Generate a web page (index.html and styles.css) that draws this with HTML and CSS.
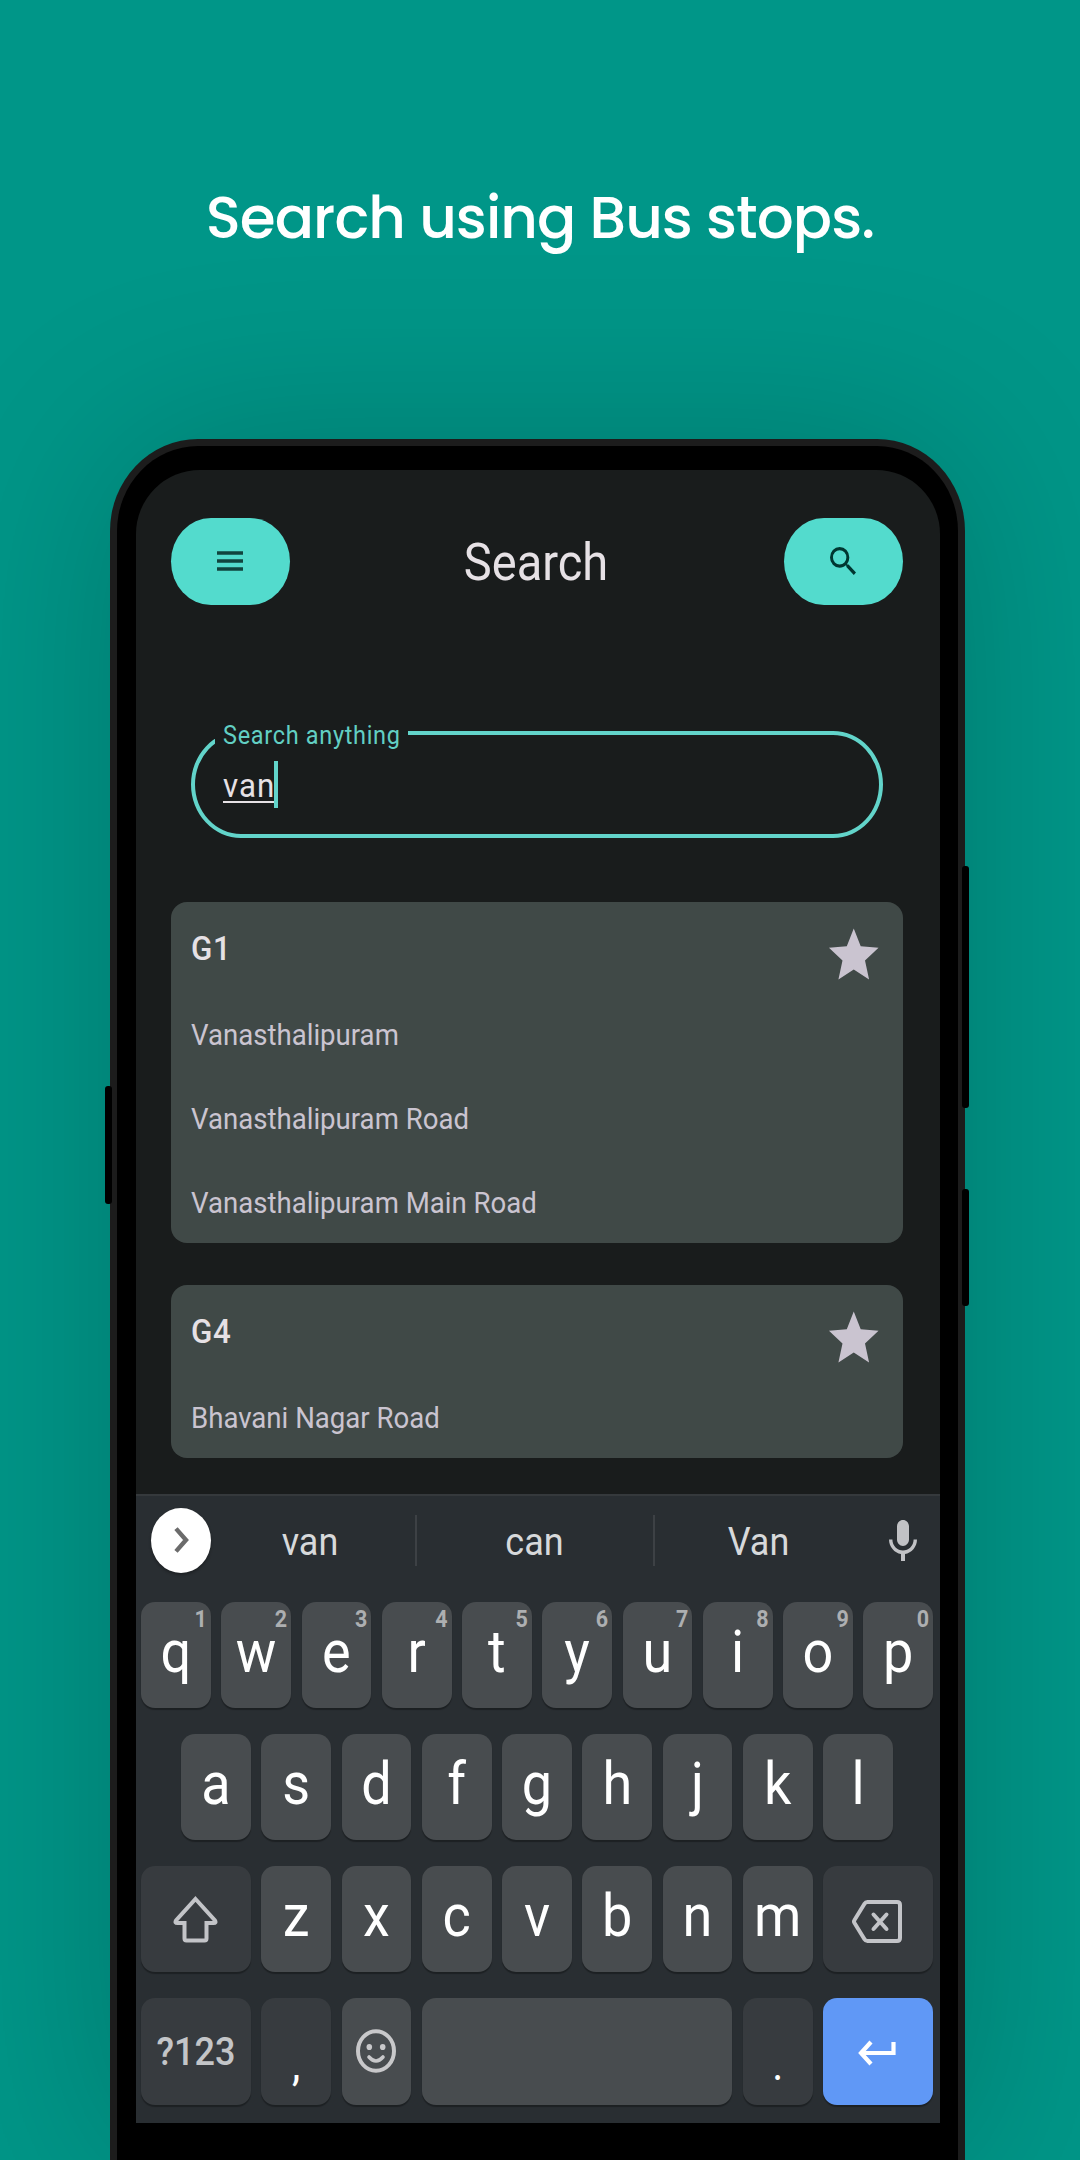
FILE: index.html
```html
<!DOCTYPE html>
<html lang="en">
<head>
<meta charset="utf-8">
<title>Search using Bus stops.</title>
<link rel="stylesheet" href="styles.css">
</head>
<body>
<div class="poster">
  <h1 class="headline"><span>Search using Bus stops.</span></h1>
  <div class="phone">
    <i class="side-button mute"></i>
    <i class="side-button volume"></i>
    <i class="side-button power"></i>
    <div class="screen">
      <main class="app">
        <header class="app-bar">
          <button class="pill" aria-label="Menu"><svg class="icon-menu" viewBox="0 0 26 20" preserveAspectRatio="none"><path d="M0 2h26M0 10h26M0 18h26" fill="none" stroke="#10443e" stroke-width="3.4"/></svg></button>
          <h2 class="title tall">Search</h2>
          <button class="pill" aria-label="Search"><svg class="icon-search" viewBox="3 3 17.49 17.49" preserveAspectRatio="none"><path fill="#003731" d="M15.5 14h-.79l-.28-.27A6.47 6.47 0 0 0 16 9.5 6.5 6.5 0 1 0 9.5 16c1.61 0 3.09-.59 4.23-1.57l.27.28v.79l5 4.99L20.49 19l-4.99-5zm-6 0a4.5 4.5 0 1 1 0-9 4.5 4.5 0 0 1 0 9z"/></svg></button>
        </header>
        <div class="field">
          <label class="field-label"><span class="tall">Search anything</span></label>
          <span class="field-value"><span class="tall">van</span></span><i class="cursor"></i>
        </div>
        <section class="card">
          <div class="card-head"><h3 class="tall">G1</h3><svg class="star" viewBox="0 0 24 24" preserveAspectRatio="none"><path d="M12 17.27 18.18 21l-1.64-7.03L22 9.24l-7.19-.61L12 2 9.19 8.63 2 9.24l5.46 4.73L5.82 21z"/></svg></div>
          <p><span class="tall">Vanasthalipuram</span></p>
          <p><span class="tall">Vanasthalipuram Road</span></p>
          <p><span class="tall">Vanasthalipuram Main Road</span></p>
        </section>
        <section class="card">
          <div class="card-head"><h3 class="tall">G4</h3><svg class="star" viewBox="0 0 24 24" preserveAspectRatio="none"><path d="M12 17.27 18.18 21l-1.64-7.03L22 9.24l-7.19-.61L12 2 9.19 8.63 2 9.24l5.46 4.73L5.82 21z"/></svg></div>
          <p><span class="tall">Bhavani Nagar Road</span></p>
        </section>
      </main>
      <div class="keyboard">
        <div class="suggestions">
          <span class="expand"><svg width="15" height="26" viewBox="0 0 15 26"><path d="M2 1.6 12 13 2 24.4" fill="none" stroke="#6b6b6b" stroke-width="4.4"/></svg></span>
          <span class="word first"><span class="tall">van</span></span>
          <span class="word middle"><span class="tall">can</span></span>
          <span class="word last"><span class="tall">Van</span></span>
          <svg class="mic" viewBox="5 2 14 19" preserveAspectRatio="none"><path d="M12 14c1.66 0 3-1.34 3-3V5c0-1.66-1.34-3-3-3S9 3.34 9 5v6c0 1.66 1.34 3 3 3zM17.3 11c0 3-2.54 5.1-5.3 5.1S6.700 14 6.700 11H5c0 3.410 2.720 6.230 6 6.720V21h2v-3.280c3.280-.48 6-3.300 6-6.720z"/></svg>
        </div>
        <div class="row">
          <span class="key"><b class="tall">q</b><small class="tall">1</small></span>
          <span class="key"><b class="tall">w</b><small class="tall">2</small></span>
          <span class="key"><b class="tall">e</b><small class="tall">3</small></span>
          <span class="key"><b class="tall">r</b><small class="tall">4</small></span>
          <span class="key"><b class="tall">t</b><small class="tall">5</small></span>
          <span class="key"><b class="tall">y</b><small class="tall">6</small></span>
          <span class="key"><b class="tall">u</b><small class="tall">7</small></span>
          <span class="key"><b class="tall">i</b><small class="tall">8</small></span>
          <span class="key"><b class="tall">o</b><small class="tall">9</small></span>
          <span class="key"><b class="tall">p</b><small class="tall">0</small></span>
        </div>
        <div class="row">
          <span class="key"><b class="tall">a</b></span>
          <span class="key"><b class="tall">s</b></span>
          <span class="key"><b class="tall">d</b></span>
          <span class="key"><b class="tall">f</b></span>
          <span class="key"><b class="tall">g</b></span>
          <span class="key"><b class="tall">h</b></span>
          <span class="key"><b class="tall">j</b></span>
          <span class="key"><b class="tall">k</b></span>
          <span class="key"><b class="tall">l</b></span>
        </div>
        <div class="row">
          <span class="key dark wide"><svg width="45" height="47" viewBox="0 0 45 47"><path d="M22.500 3 42 24.500Q43.500 27 40.500 27H33.500V42.500Q33.500 44.500 31.500 44.500H13.500Q11.500 44.500 11.500 42.500V27H4.500Q1.500 27 3 24.500Z" fill="none" stroke="#c3c4c8" stroke-width="4"/></svg></span>
          <span class="key"><b class="tall">z</b></span>
          <span class="key"><b class="tall">x</b></span>
          <span class="key"><b class="tall">c</b></span>
          <span class="key"><b class="tall">v</b></span>
          <span class="key"><b class="tall">b</b></span>
          <span class="key"><b class="tall">n</b></span>
          <span class="key"><b class="tall">m</b></span>
          <span class="key dark wide"><svg class="icon-backspace" width="50" height="43" viewBox="0 0 50 43"><path d="M15.500 2H45Q48 2 48 5V38Q48 41 45 41H15.500Q13.500 41 12.500 39.300L2.500 23Q1.500 21.500 2.500 20L12.500 3.700Q13.500 2 15.500 2Z" fill="none" stroke="#c3c4c8" stroke-width="4"/><path d="M21.500 14.500 34.500 29M34.500 14.500 21.500 29" fill="none" stroke="#c3c4c8" stroke-width="4" stroke-linecap="round"/></svg></span>
        </div>
        <div class="row">
          <span class="key dark wide symbols"><b class="tall">?123</b></span>
          <span class="key dark mark"><b class="tall">,</b></span>
          <span class="key emoji"><svg width="40" height="44" viewBox="0 0 40 44"><ellipse cx="20" cy="22" rx="18" ry="19.800" fill="none" stroke="#c8c8ca" stroke-width="4"/><ellipse cx="13.300" cy="18" rx="2.800" ry="3.100" fill="#c8c8ca"/><ellipse cx="26.700" cy="18" rx="2.800" ry="3.100" fill="#c8c8ca"/><path d="M13 28Q20 36 27 28" fill="none" stroke="#c8c8ca" stroke-width="3.600" stroke-linecap="round"/></svg></span>
          <span class="key space"></span>
          <span class="key dark mark"><b class="tall">.</b></span>
          <span class="key wide enter"><svg width="38" height="26" viewBox="0 0 38 26"><path d="M35.500 2V13H4M13 2 3 13 13 24" fill="none" stroke="#fff" stroke-width="4.2"/></svg></span>
        </div>
      </div>
    </div>
  </div>
</div>
</body>
</html>
```
FILE: styles.css
```css
* { box-sizing: border-box; margin: 0; padding: 0; }

body {
  width: 1080px;
  height: 2160px;
  overflow: hidden;
  font-family: Roboto, "Liberation Sans", sans-serif;
}

.poster {
  display: flex;
  flex-direction: column;
  height: 2160px;
  overflow: hidden;
  background: #009688;
}

.headline {
  flex: none;
  height: 439px;
  padding-top: 183px;
  text-align: center;
  color: #fff;
  font: 500 58px/70px Poppins, Inter, sans-serif;
  letter-spacing: -.93px;
}

/* Device text is slightly taller than its natural proportions. */
.tall { display: inline-block; transform: scaleY(1.083); }

.phone {
  position: relative;
  flex: 1;
  width: 855px;
  margin-left: 110px;
  padding: 24px 18px 0 19px;
  background: #000;
  border: 7px solid #1c1c1c;
  border-bottom: 0;
  border-radius: 88px 88px 0 0 / 92px 92px 0 0;
  box-shadow: 0 0 190px rgba(0, 0, 0, .2);
}

.side-button {
  position: absolute;
  width: 7px;
  background: #000;
  border-radius: 3px;
}
.mute { left: -12px; top: 640px; height: 118px; }
.volume { right: -11px; top: 420px; height: 242px; }
.power { right: -11px; top: 743px; height: 117px; }

.screen {
  width: 804px;
  height: 1653px;
  display: flex;
  flex-direction: column;
  overflow: hidden;
  background: #191c1c;
  border-radius: 64px 64px 0 0;
}

.app {
  flex: none;
  height: 1024px;
  padding: 48px 37px 0 35px;
}

.app-bar {
  display: flex;
  justify-content: space-between;
  align-items: center;
  height: 87px;
}
.pill {
  display: flex;
  justify-content: center;
  align-items: center;
  width: 119px;
  height: 87px;
  padding: 0 1px 1px 0;
  border: 0;
  border-radius: 40px / 43.500px;
  background: #53dbcd;
}
.icon-menu { width: 26px; height: 20px; }
.icon-search { width: 26px; height: 28px; }
.title {
  padding: 2px 2px 0 0;
  font-size: 47px;
  font-weight: 400;
  color: #e6e1e5;
}

.field {
  position: relative;
  display: flex;
  align-items: center;
  width: 692px;
  height: 107px;
  margin: 126px 0 64px 20px;
  padding: 2px 0 0 28px;
  border: 4px solid #62d4ca;
  border-radius: 50px / 53.500px;
}
.field-label {
  position: absolute;
  left: 20px;
  top: -16px;
  width: 193px;
  height: 32px;
  padding-left: 8px;
  background: #191c1c;
  color: #62cfc3;
  font-size: 23.500px;
  line-height: 32px;
  letter-spacing: .68px;
  white-space: nowrap;
}
.field-value {
  height: 35px;
  border-bottom: 2px solid #e6e1e5;
  color: #e6e1e5;
  font-size: 31.300px;
  line-height: 36px;
  letter-spacing: .98px;
}
.cursor { width: 4px; height: 47px; margin: -2px 0 0 -1px; background: #62d4ca; }

.card {
  width: 732px;
  margin-bottom: 42px;
  padding: 0 20px;
  border-radius: 16px;
  background: #404947;
}
.card-head {
  display: flex;
  justify-content: space-between;
  height: 89px;
  line-height: 93px;
}
.card-head h3 {
  height: 93px;
  color: #e6e1e5;
  font-size: 31.300px;
  font-weight: 500;
  letter-spacing: .6px;
}
.star { width: 59.500px; height: 64.500px; margin: 21px 0 0 0; fill: #cac4d0; }
.card p {
  height: 84px;
  line-height: 88px;
  color: #cac4d0;
  font-size: 27.600px;
}

.keyboard {
  flex: none;
  height: 629px;
  padding: 0 7px 0 5px;
  background: #292e32;
  border-top: 2px solid #35393c;
}
.suggestions {
  display: flex;
  align-items: center;
  height: 105.500px;
  padding: 0 0 17px 10px;
}
.expand {
  display: flex;
  justify-content: center;
  align-items: center;
  width: 60px;
  height: 65px;
  border-radius: 50%;
  background: #fff;
  box-shadow: 0 2px 3px rgba(0, 0, 0, .3);
}
.word {
  display: flex;
  justify-content: center;
  align-items: center;
  height: 51px;
  padding-top: 4px;
  color: #d7d9db;
  font-size: 36px;
  border-right: 2px solid #3d4145;
}
.first { width: 206px; padding-right: 6px; }
.middle { width: 238px; padding-right: 1px; }
.last { width: 208px; padding-right: 1px; border-right: 0; }
.mic { width: 28px; height: 41px; margin-left: 26px; fill: #c1c2c5; }

.row {
  display: flex;
  justify-content: center;
  gap: 10.500px;
  height: 106.500px;
  margin-bottom: 25.700px;
}
.key {
  position: relative;
  display: flex;
  justify-content: center;
  align-items: center;
  flex: none;
  width: 69.750px;
  padding-bottom: 7px;
  border-radius: 14px;
  background: #484c4f;
  box-shadow: 0 1.500px 1px rgba(0, 0, 0, .3);
  color: #fff;
}
.key b { font-size: 54px; font-weight: 400; }
.key small {
  position: absolute;
  top: 4px;
  right: 4px;
  color: #adafb1;
  font-size: 21.500px;
  font-weight: 700;
  line-height: 25px;
}
.wide { width: 109.900px; }
.space { width: 310.500px; }
.dark { background: #373b3f; }
.key.wide, .key.emoji { padding-bottom: 0; }
.emoji { padding-right: 1px; }
.key.symbols { padding-top: 2px; }
.symbols b { color: #c3c5c8; font-size: 36px; font-weight: 500; }
.key.mark { padding: 26px 0 0; }
.mark b { font-size: 42px; }
.icon-backspace { margin: 5px 2px 0 0; }
.enter { padding: 4px 2px 0 0; background: #6098f6; }
```
